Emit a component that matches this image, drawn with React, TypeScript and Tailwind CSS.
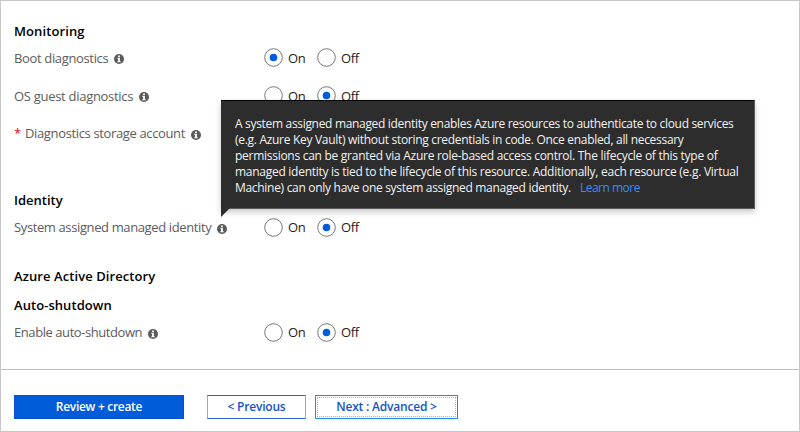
import type { ReactNode } from "react";

function InfoIcon() {
  return (
    <svg className="ml-[6px] h-[10px] w-[10px] shrink-0" viewBox="0 0 10 10">
      <circle cx="5" cy="5" r="5" fill="#5b5b5b" />
      <path d="M4.1 1.4h1.8v1.5H4.1zM3.4 3.8h2.5v3.4h.8v1.1H3.3V7.2h.8V4.9h-.7z" fill="#fff" />
    </svg>
  );
}

function Radio({ label, checked }: { label: string; checked?: boolean }) {
  return (
    <label className="flex w-[53px] items-center tracking-[-0.4px] text-[#222]">
      <svg className="mr-[5px] h-[19px] w-[19px] shrink-0" viewBox="0 0 19 19">
        <circle cx="9.5" cy="9.5" r="8.8" fill="#fff" stroke="#777" />
        {checked && <circle cx="9.5" cy="9.5" r="3.8" fill="#015cda" />}
      </svg>
      <span>{label}</span>
    </label>
  );
}

function Heading({ children, className }: { children: ReactNode; className: string }) {
  return <h2 className={`flex h-5 items-center pt-0.5 text-[13px] font-semibold text-black ${className}`}>{children}</h2>;
}

function Row({ label, value, required, className }: { label: ReactNode; value?: "On" | "Off"; required?: boolean; className: string }) {
  return (
    <div className={`flex h-[19px] items-center text-[13px] text-[#5c5c5c] [&_span]:leading-[19px] ${className}`}>
      <div className="flex w-[250px] items-center">
        {required && <span className="w-[11px] text-[#e00b1c]">*</span>}
        {label}
        <span className="flex h-[19px] items-end pb-[3px]">
          <InfoIcon />
        </span>
      </div>
      {value && (
        <>
          <Radio label="On" checked={value === "On"} />
          <Radio label="Off" checked={value === "Off"} />
        </>
      )}
    </div>
  );
}

export default function App() {
  return (
    <div className="relative flex h-[432px] w-[800px] flex-col border border-[#c8c8c8] bg-white font-['Open_Sans','Noto_Sans',sans-serif] whitespace-nowrap">
      <main className="h-[369px] shrink-0 border-b border-[#bdbdbd] pt-5 pl-[13px]">
        <Heading className="tracking-[0.1px]">Monitoring</Heading>
        <Row className="mt-[7px] [&_span]:pt-0.5" value="On" label={<span className="tracking-[-0.35px]">Boot diagnostics</span>} />
        <Row className="mt-[19px] [&_span]:pt-0.5" value="Off" label={<span className="tracking-[-0.29px]">OS guest diagnostics</span>} />
        <Row className="mt-[19px]" required label={<span className="tracking-[-0.36px]">Diagnostics storage account</span>} />
        <Heading className="mt-[47px]">Identity</Heading>
        <Row className="mt-2" value="Off" label={<span className="tracking-[-0.38px]">System assigned managed identity</span>} />
        <Heading className="mt-[29px] tracking-[0.08px]">Azure Active Directory</Heading>
        <Heading className="mt-[9px] tracking-[0.06px]">Auto-shutdown</Heading>
        <Row className="mt-2" value="Off" label={<span className="tracking-[-0.43px]">Enable auto-shutdown</span>} />
      </main>

      <footer className="flex pt-[25px] pl-[13px] text-[12px] font-semibold">
        <button className="h-6 w-[170px] border border-[#0b4fd0] bg-[#015cda] text-white">
          <span className="tracking-[-0.3px]">Review + create</span>
        </button>
        <button className="ml-[23px] h-6 w-[99px] border border-[#2a62d8] border-x-[#8aa8ec] pl-1 text-[#1553cf]">
          <span className="mr-1 tracking-[-0.2px]">&lt; Previous</span>
        </button>
        <button className="ml-[9px] h-6 w-[143px] border border-[#1c8fe0] p-px text-[#1553cf]">
          <span className="flex h-full items-center justify-center border border-dotted border-[#8fb4ee] tracking-[-0.2px]">Next : Advanced &gt;</span>
        </button>
      </footer>

      <div role="tooltip" className="absolute top-[99px] left-[220px] h-[109px] w-[534px] border-t border-r border-b border-t-black border-r-[#5c5c5c] border-b-[#5c5c5c] bg-[#2d2d2d] pt-[15px] pl-[14px] text-[12px] leading-4 text-[#f2f2f2] shadow-[0_3px_6px_rgba(0,0,0,0.22)]">
        <p className="tracking-[-0.318px]">A system assigned managed identity enables Azure resources to authenticate to cloud services</p>
        <p className="tracking-[-0.3px]">(e.g. Azure Key Vault) without storing credentials in code. Once enabled, all necessary</p>
        <p className="tracking-[-0.275px]">permissions can be granted via Azure role-based access control. The lifecycle of this type of</p>
        <p className="tracking-[-0.27px]">managed identity is tied to the lifecycle of this resource. Additionally, each resource (e.g. Virtual</p>
        <p className="flex gap-[9px]">
          <span className="tracking-[-0.3px]">Machine) can only have one system assigned managed identity.</span>
          <a className="tracking-[-0.5px] text-[#3b8cf2]">Learn more</a>
        </p>
        <svg className="absolute top-[107px] left-0 h-[9px] w-[9px]" viewBox="0 0 9 9">
          <path d="M0 0h9L0 9z" fill="#2d2d2d" />
        </svg>
      </div>
    </div>
  );
}
